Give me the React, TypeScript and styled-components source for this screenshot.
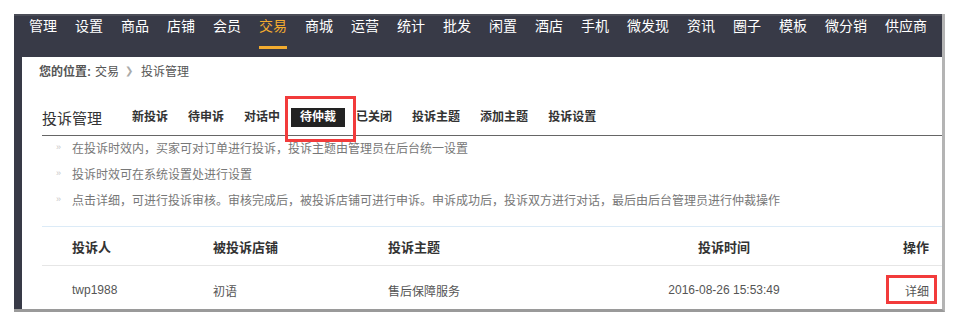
import * as React from "react";
import styled, { createGlobalStyle } from "styled-components";

const GlobalStyle = createGlobalStyle`
  html, body {
    margin: 0;
    padding: 0;
    background: #ffffff;
  }
  body {
    font-family: "Liberation Sans", "Noto Sans CJK SC", sans-serif;
    font-size: 12px;
    color: #555;
  }
`;

const navItems = [
  "管理", "设置", "商品", "店铺", "会员", "交易", "商城", "运营", "统计", "批发",
  "闲置", "酒店", "手机", "微发现", "资讯", "圈子", "模板", "微分销", "供应商",
];

const tabs = ["新投诉", "待申诉", "对话中", "待仲裁", "已关闭", "投诉主题", "添加主题", "投诉设置"];

const hints = [
  "在投诉时效内，买家可对订单进行投诉，投诉主题由管理员在后台统一设置",
  "投诉时效可在系统设置处进行设置",
  "点击详细，可进行投诉审核。审核完成后，被投诉店铺可进行申诉。申诉成功后，投诉双方进行对话，最后由后台管理员进行仲裁操作",
];

const Frame = styled.div`
  margin: 14px 0 0 14px;
  width: 928px;
  background: #383a47;
  border-right: 3px solid #b4b4b4;
  border-bottom: 3px solid #9a9a9a;
`;

const NavBar = styled.nav`
  display: flex;
  gap: 18px;
  height: 41px;
  padding-left: 15px;
  border-top: 2px solid #4b4d57;
`;

const NavItem = styled.a<{ $active?: boolean }>`
  position: relative;
  font-size: 14px;
  line-height: 20px;
  padding-top: 0;
  color: ${({ $active }) => ($active ? "#f2ab2f" : "#ffffff")};
  text-decoration: none;
  white-space: nowrap;

  &::after {
    content: "";
    display: ${({ $active }) => ($active ? "block" : "none")};
    position: absolute;
    left: 0;
    right: 0;
    top: 30px;
    height: 3px;
    background: #f2ab2f;
  }
`;

const Main = styled.main`
  margin-left: 8px;
  height: 252px;
  overflow: hidden;
  background: #ffffff;
  padding-left: 20px;
`;

const Breadcrumb = styled.div`
  display: flex;
  align-items: center;
  height: 26px;
  margin-left: -3px;
  color: #555;
  font-size: 12px;
`;

const CrumbLabel = styled.b`
  margin-right: 4px;
`;

const CrumbSep = styled.span`
  color: #aaa;
  font-size: 10px;
  margin: 0 8px 0 6px;
`;

const TabRow = styled.div`
  position: relative;
  display: flex;
  align-items: center;
  height: 36px;
  margin-top: 16px;
  border-bottom: 1px solid #666;
`;

const PageTitle = styled.h2`
  margin: 0 21px 0 0;
  font-size: 15px;
  font-weight: normal;
  color: #333;
`;

const Tab = styled.a<{ $active?: boolean }>`
  padding: 0 9px;
  margin-right: 2px;
  height: 19px;
  line-height: 19px;
  font-size: 12px;
  font-weight: bold;
  color: ${({ $active }) => ($active ? "#ffffff" : "#333")};
  background: ${({ $active }) => ($active ? "#222222" : "transparent")};
  white-space: nowrap;
`;

const Marker = styled.div`
  position: absolute;
  border: 3px solid #f23b3b;
  box-sizing: border-box;
  pointer-events: none;
`;

const HintList = styled.ul`
  list-style: none;
  margin: -2px 0 0 0;
  padding: 0;
`;

const Hint = styled.li`
  display: flex;
  align-items: center;
  height: 26px;
  color: #777;
  font-size: 12px;

  &::before {
    content: "»";
    width: 16px;
    margin-left: 14px;
    color: #c8c8c8;
    font-size: 9px;
  }
`;

const Table = styled.div`
  position: relative;
  margin-top: 14px;
  border-top: 1px solid #dcebf7;
`;

const TableRow = styled.div<{ $head?: boolean }>`
  display: grid;
  grid-template-columns: 141px 175px 221px 230px 90px;
  align-items: center;
  height: ${({ $head }) => ($head ? "38px" : "48px")};
  padding: 0 14px 0 30px;
  border-bottom: ${({ $head }) => ($head ? "1px solid #e6e6e6" : "none")};
  font-size: ${({ $head }) => ($head ? "13px" : "12px")};
  font-weight: ${({ $head }) => ($head ? "bold" : "normal")};
  color: ${({ $head }) => ($head ? "#333" : "#555")};
`;

const Cell = styled.div<{ $align?: "left" | "center" | "right" }>`
  text-align: ${({ $align }) => $align || "left"};
  white-space: nowrap;
`;

const App: React.FC = () => {
  return (
    <>
      <GlobalStyle />
      <Frame>
        <NavBar>
          {navItems.map((item) => (
            <NavItem key={item} $active={item === "交易"}>
              {item}
            </NavItem>
          ))}
        </NavBar>
        <Main>
          <Breadcrumb>
            <CrumbLabel>您的位置:</CrumbLabel>
            <span>交易</span>
            <CrumbSep>❯</CrumbSep>
            <span>投诉管理</span>
          </Breadcrumb>
          <TabRow>
            <PageTitle>投诉管理</PageTitle>
            {tabs.map((t) => (
              <Tab key={t} $active={t === "待仲裁"}>
                {t}
              </Tab>
            ))}
            <Marker style={{ left: 243, top: -3, width: 71, height: 46 }} />
          </TabRow>
          <HintList>
            {hints.map((h) => (
              <Hint key={h}>{h}</Hint>
            ))}
          </HintList>
          <Table>
            <TableRow $head>
              <Cell>投诉人</Cell>
              <Cell>被投诉店铺</Cell>
              <Cell>投诉主题</Cell>
              <Cell $align="center">投诉时间</Cell>
              <Cell $align="right">操作</Cell>
            </TableRow>
            <TableRow>
              <Cell>twp1988</Cell>
              <Cell>初语</Cell>
              <Cell>售后保障服务</Cell>
              <Cell $align="center">2016-08-26 15:53:49</Cell>
              <Cell $align="right">详细</Cell>
            </TableRow>
            <Marker style={{ left: 844, top: 48, width: 51, height: 29 }} />
          </Table>
        </Main>
      </Frame>
    </>
  );
};

export default App;
